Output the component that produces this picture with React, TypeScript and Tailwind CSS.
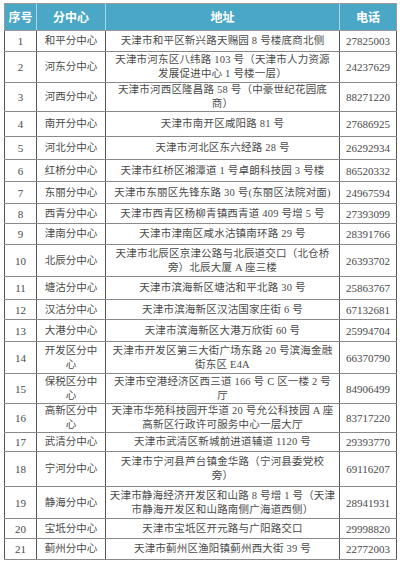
interface Branch {
  no: number
  name: string[]
  address: string[]
  phone: string
  h: string
}

const branches: Branch[] = [
  { no: 1, name: ['和平分中心'], address: ['天津市和平区新兴路天赐园 8 号楼底商北侧'], phone: '27825003', h: 'h-[21px]' },
  { no: 2, name: ['河东分中心'], address: ['天津市河东区八纬路 103 号（天津市人力资源', '发展促进中心 1 号楼一层）'], phone: '24237629', h: 'h-[31px]' },
  { no: 3, name: ['河西分中心'], address: ['天津市河西区隆昌路 58 号（中豪世纪花园底', '商）'], phone: '88271220', h: 'h-[28px]' },
  { no: 4, name: ['南开分中心'], address: ['天津市南开区咸阳路 81 号'], phone: '27686925', h: 'h-[25px]' },
  { no: 5, name: ['河北分中心'], address: ['天津市河北区东六经路 28 号'], phone: '26292934', h: 'h-[23px]' },
  { no: 6, name: ['红桥分中心'], address: ['天津市红桥区湘潭道 1 号卓朗科技园 3 号楼'], phone: '86520332', h: 'h-[22px]' },
  { no: 7, name: ['东丽分中心'], address: ['天津市东丽区先锋东路 30 号(东丽区法院对面)'], phone: '24967594', h: 'h-[22px]' },
  { no: 8, name: ['西青分中心'], address: ['天津市西青区杨柳青镇西青道 409 号增 5 号'], phone: '27393099', h: 'h-[20px]' },
  { no: 9, name: ['津南分中心'], address: ['天津市津南区咸水沽镇南环路 29 号'], phone: '28391766', h: 'h-[21px]' },
  { no: 10, name: ['北辰分中心'], address: ['天津市北辰区京津公路与北辰道交口（北仓桥', '旁）北辰大厦 A 座三楼'], phone: '26393702', h: 'h-[32px]' },
  { no: 11, name: ['塘沽分中心'], address: ['天津市滨海新区塘沽和平北路 30 号'], phone: '25863767', h: 'h-[23px]' },
  { no: 12, name: ['汉沽分中心'], address: ['天津市滨海新区汉沽国家庄街 6 号'], phone: '67132681', h: 'h-[20px]' },
  { no: 13, name: ['大港分中心'], address: ['天津市滨海新区大港万欣街 60 号'], phone: '25994704', h: 'h-[22px]' },
  { no: 14, name: ['开发区分中', '心'], address: ['天津市开发区第三大街广场东路 20 号滨海金融', '街东区 E4A'], phone: '66370790', h: 'h-[32px]' },
  { no: 15, name: ['保税区分中', '心'], address: ['天津市空港经济区西三道 166 号 C 区一楼 2 号', '厅'], phone: '84906499', h: 'h-[30px]' },
  { no: 16, name: ['高新区分中', '心'], address: ['天津市华苑科技园开华道 20 号允公科技园 A 座', '高新区行政许可服务中心一层大厅'], phone: '83717220', h: 'h-[27px]' },
  { no: 17, name: ['武清分中心'], address: ['天津市武清区新城前进道辅道 1120 号'], phone: '29393770', h: 'h-[19px]' },
  { no: 18, name: ['宁河分中心'], address: ['天津市宁河县芦台镇金华路（宁河县委党校', '旁）'], phone: '69116207', h: 'h-[35px]' },
  { no: 19, name: ['静海分中心'], address: ['天津市静海经济开发区和山路 8 号增 1 号（天津', '市静海开发区和山路南侧广海道西侧）'], phone: '28941931', h: 'h-[32px]' },
  { no: 20, name: ['宝坻分中心'], address: ['天津市宝坻区开元路与广阳路交口'], phone: '29998820', h: 'h-[20px]' },
  { no: 21, name: ['蓟州分中心'], address: ['天津市蓟州区渔阳镇蓟州西大街 39 号'], phone: '22772003', h: 'h-[21px]' },
]

const body = "[font-family:'Liberation_Serif','Noto_Sans_CJK_SC',serif]"

export default function App() {
  return (
    <div className="w-[400px] h-[563px] bg-white pt-[3px] px-[4px]">
      <table className="table-fixed border-collapse w-[392px] text-[#4a4a4a]">
        <colgroup>
          <col className="w-[32px]" />
          <col className="w-[69px]" />
          <col className="w-[234px]" />
          <col className="w-[57px]" />
        </colgroup>
        <thead>
          <tr className="h-[27px] bg-[#4ba7c6] text-white text-[12px] font-bold [font-family:'Noto_Sans_CJK_SC',sans-serif]">
            <th className="border border-[#9a9a9a] border-r-[#a8d6e6] font-bold">序号</th>
            <th className="border border-[#9a9a9a] border-r-[#a8d6e6] font-bold">分中心</th>
            <th className="border border-[#9a9a9a] border-r-[#a8d6e6] font-bold">地址</th>
            <th className="border border-[#9a9a9a] font-bold">电话</th>
          </tr>
        </thead>
        <tbody className={`${body} text-[10.5px] leading-[14px]`}>
          {branches.map((b) => (
            <tr key={b.no} className={b.h}>
              <td className="border border-[#555] border-y-[#8a8a8a] text-center p-0 text-[11px]">{b.no}</td>
              <td className="border border-[#555] border-y-[#8a8a8a] text-center px-[3px] py-0 whitespace-nowrap">
                {b.name.map((l, i) => (
                  <div key={i}>{l}</div>
                ))}
              </td>
              <td className="border border-[#555] border-y-[#8a8a8a] text-center px-[2px] py-0 whitespace-nowrap tracking-[0.2px]">
                {b.address.map((l, i) => (
                  <div key={i}>{l}</div>
                ))}
              </td>
              <td className="border border-[#555] border-y-[#8a8a8a] text-center p-0 text-[11px]">{b.phone}</td>
            </tr>
          ))}
        </tbody>
      </table>
    </div>
  )
}
